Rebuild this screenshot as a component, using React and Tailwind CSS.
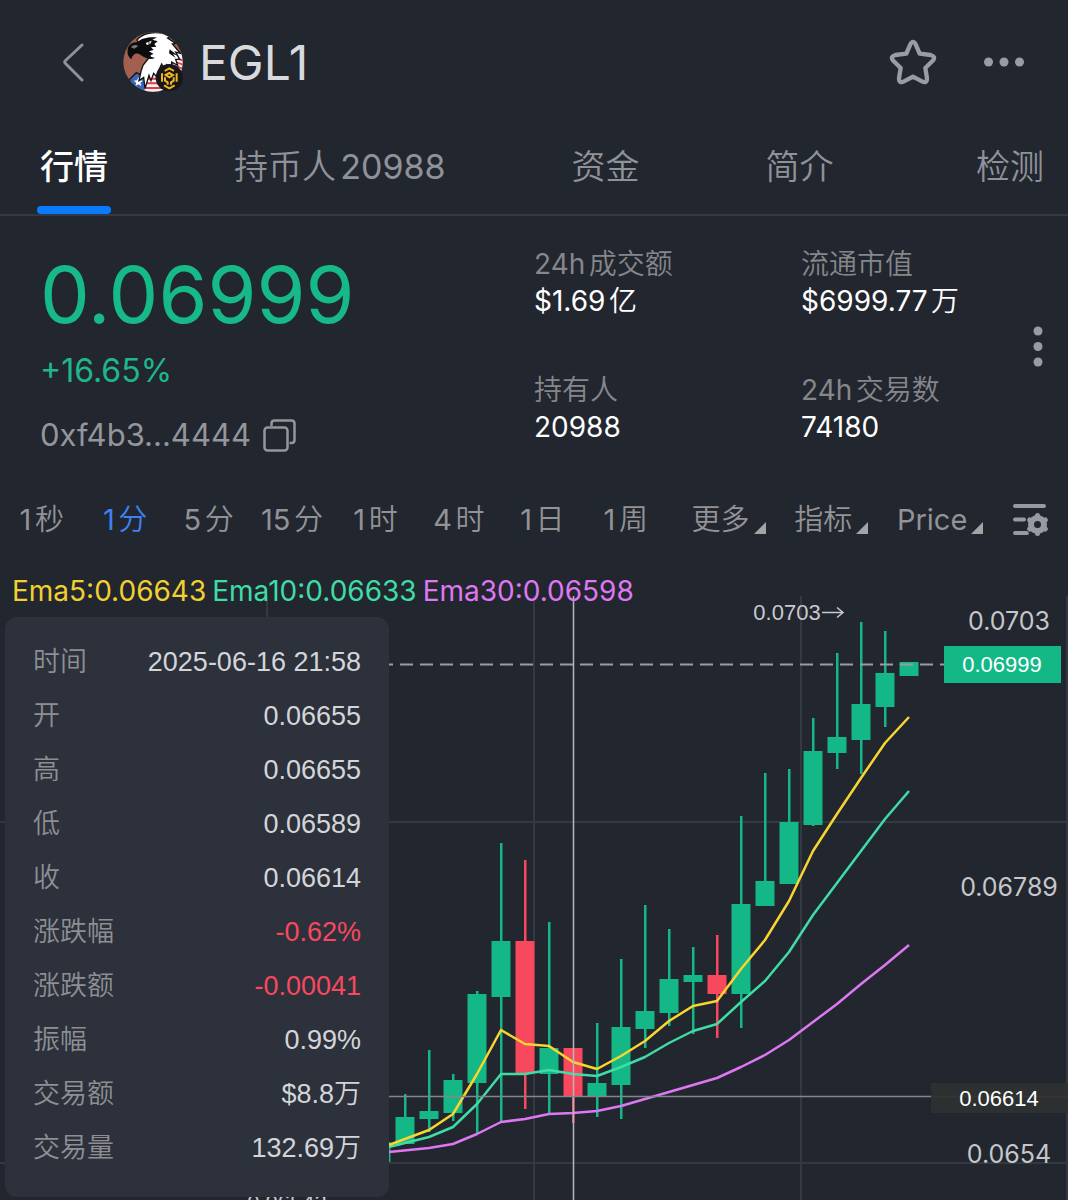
const tabs = ['行情', '持币人20988', '资金', '简介', '检测'];

const stats = [
    [
        { label: '24h成交额', value: '$1.69亿' },
        { label: '持有人', value: '20988' },
    ],
    [
        { label: '流通市值', value: '$6999.77万' },
        { label: '24h交易数', value: '74180' },
    ],
];

const intervals = ['1秒', '1分', '5分', '15分', '1时', '4时', '1日', '1周'];
const menus = ['更多', '指标', 'Price'];

const details = [
    { label: '时间', value: '2025-06-16 21:58' },
    { label: '开', value: '0.06655' },
    { label: '高', value: '0.06655' },
    { label: '低', value: '0.06589' },
    { label: '收', value: '0.06614' },
    { label: '涨跌幅', value: '-0.62%', down: true },
    { label: '涨跌额', value: '-0.00041', down: true },
    { label: '振幅', value: '0.99%' },
    { label: '交易额', value: '$8.8万' },
    { label: '交易量', value: '132.69万' },
];

// x, body top, body bottom, wick top, wick bottom, falling
const candles = [
    [381, 569, 589, 569, 589],
    [405, 544, 571, 521, 571],
    [429, 538, 546, 477, 559],
    [453, 507, 540, 501, 548],
    [477, 421, 510, 418, 560],
    [501, 368, 424, 270, 549],
    [525, 368, 500, 287, 536, true],
    [549, 475, 501, 349, 540],
    [573, 475, 523, 475, 550, true],
    [597, 510, 523, 450, 544],
    [621, 454, 512, 386, 546],
    [645, 438, 456, 332, 475],
    [669, 406, 440, 356, 453],
    [693, 402, 409, 374, 461],
    [717, 402, 421, 362, 465, true],
    [741, 331, 421, 243, 455],
    [765, 308, 333, 200, 333],
    [789, 249, 311, 196, 311],
    [813, 178, 252, 145, 253],
    [837, 164, 180, 80, 196],
    [861, 131, 167, 49, 201],
    [885, 100, 134, 58, 154],
    [909, 89, 103, 89, 103],
];

const emas = [
    { color: '#de78f2', points: '389,579 429,575 453,571 477,561 501,549 525,546 549,541 573,540 597,538 621,533 645,526 669,519 693,512 717,505 741,494 765,482 789,467 813,449 837,431 861,411 885,392 909,372' },
    { color: '#3fdca6', points: '389,574 405,570 429,564 453,554 477,531 501,501 525,501 549,497 573,501 597,503 621,494 645,484 669,470 693,458 717,451 741,429 765,408 789,379 813,342 837,310 861,278 885,246 909,218' },
    { color: '#f8d530', points: '389,572 405,566 429,557 453,541 477,501 501,457 525,471 549,473 573,489 597,496 621,483 645,468 669,448 693,433 717,428 741,396 765,367 789,328 813,278 837,241 861,205 885,170 909,144' },
];

function TokenLogo() {
    return (
        <svg viewBox="0 0 180 180" className="h-[60px] w-[60px]" aria-hidden="true">
            <defs>
                <clipPath id="logo-clip">
                    <circle cx="90" cy="90" r="89" />
                </clipPath>
            </defs>
            <g clipPath="url(#logo-clip)">
                <rect width="180" height="180" fill="#a4604f" />
                <path d="M20 142 L40 122 L76 140 L68 180 L20 180Z" fill="#3a66b4" stroke="#15151a" strokeWidth="4" />
                <path d="M46 136l4 9 10 1-8 6 3 10-9-5-9 5 3-10-8-6 10-1z" fill="#fff" />
                <path d="M70 126 H130 V180 H64Z" fill="#f4f0ee" />
                <path d="M70 140h50M68 154h50M66 168h60" stroke="#dd3c45" strokeWidth="6" />
                <path d="M152 60 L180 64 V130 L150 110Z" fill="#f4f0ee" />
                <path d="M160 78l20 8M158 90l22 8M156 102l24 8" stroke="#dd3c45" strokeWidth="5" />
                {/* Head and neck feathers */}
                <path
                    d="M42 24 C58 4 92 -2 120 4 L142 14 L134 18 L158 34 L148 36 L172 64 L158 60 L170 82 L158 82 L164 100 L146 90 L144 110 L132 98 L124 112 L116 96 L106 118 L102 136 L92 124 L84 146 L78 130 L66 170 L62 136 L48 146 L54 118 L60 100 L82 72 L60 50Z"
                    fill="#fff"
                    stroke="#101014"
                    strokeWidth="4"
                />
                <path d="M140 52 L166 72 L150 66 L158 78 L138 64Z" fill="#101014" />
                {/* Brow and beak */}
                <path
                    d="M14 54 C14 40 26 30 44 30 C54 18 78 14 102 16 L88 23 L104 28 L94 36 L100 44 L84 46 L92 54 L78 58 L92 66 L76 72 L96 78 C76 86 62 74 48 66 C38 62 28 68 25 82 C15 74 12 64 14 54Z"
                    fill="#0c0c0f"
                />
                <path d="M24 46 C30 38 38 37 46 42 L34 50Z" fill="#77787c" />
                <path d="M68 33 L86 26 L82 35 L72 39Z" fill="#fff" />
                <circle cx="78" cy="33" r="2.500" fill="#0c0c0f" />
            </g>
            <circle cx="139" cy="137" r="41" fill="#17171b" />
            <g fill="none" stroke="#eeb51f" strokeWidth="6">
                <path d="M125 117 L139 109 L153 117 M161 124 V149 M155 160 L139 169 L123 160 M117 149 V124" />
                <path d="M128 129 L139 123 L150 129 L139 136Z" />
                <path d="M126 136 V146 L134 151 V158 M152 136 V146 L144 151 V158" />
            </g>
        </svg>
    );
}

function Header() {
    return (
        <header className="flex h-[124px] items-center pr-11 pl-[60px]">
            <button type="button" aria-label="返回" className="mr-9">
                <svg viewBox="0 0 27 40" className="h-10 w-[27px]" fill="none" stroke="#8e9196" strokeWidth="3" strokeLinecap="round" strokeLinejoin="round">
                    <path d="M22 3 L5.500 18.500 Q4 20 5.500 21.500 L22 38" />
                </svg>
            </button>
            <TokenLogo />
            <h1 className="ml-4 pt-[2px] text-[48px] leading-[60px] text-[#d9dadd]">EGL1</h1>
            <button type="button" aria-label="收藏" className="ml-auto">
                <svg viewBox="86 54 144 144" className="h-12 w-12" fill="none" stroke="#999ca2" strokeWidth="13" strokeLinejoin="round">
                    <path d="M138 101 L150 73 Q158 58 166 73 L178 101 L211 105 Q228 110 217 122 L195 144 L200 175 Q200 192 185 184 L158 170 L131 184 Q116 192 116 175 L121 144 L99 122 Q88 110 105 105Z" />
                </svg>
            </button>
            <button type="button" aria-label="更多操作" className="ml-[47px]">
                <svg viewBox="0 0 40 10" className="h-[10px] w-10" fill="#999ca2">
                    <circle cx="4.500" cy="5" r="4.500" />
                    <circle cx="20" cy="5" r="4.500" />
                    <circle cx="35.500" cy="5" r="4.500" />
                </svg>
            </button>
        </header>
    );
}

function Tabs() {
    return (
        <nav className="flex items-start gap-[126px] border-b-2 border-[#343843] pr-6 pl-10 text-[34px] leading-[50px] [text-autospace:normal]">
            {tabs.map((tab, i) => (
                <a
                    key={tab}
                    href="#"
                    className={`flex flex-col pt-[18px] whitespace-nowrap last:ml-auto ${i === 0 ? "font-medium text-white [font-family:Inter,'Noto_Sans_CJK_SC',sans-serif]" : 'text-[#8f9299]'}`}
                >
                    {tab}
                    <span className={`-mx-[3px] mt-[14px] h-2 rounded-full ${i === 0 ? 'bg-[#0a7bff]' : ''}`}></span>
                </a>
            ))}
        </nav>
    );
}

function Summary() {
    return (
        <section className="flex">
            <div className="w-1/2 pt-[38px] pl-10">
                <p className="text-[79px] leading-[80px] text-[#16b987]">0.06999</p>
                <p className="mt-[13px] text-[32px] leading-[48px] text-[#1fb78a]">+16.65%</p>
                <div className="mt-4 flex items-center gap-3 text-[31px] leading-[48px] text-[#94969b]">
                    0xf4b3...4444
                    <button type="button" aria-label="复制地址">
                        <svg viewBox="0 0 33 33" className="h-[33px] w-[33px]" fill="none" stroke="#94969b" strokeWidth="2.500">
                            <rect x="1.500" y="8.500" width="23" height="23" rx="3" />
                            <path d="M8.500 7 V4.500 Q8.500 1.500 11.500 1.500 H28.500 Q31.500 1.500 31.500 4.500 V21 Q31.500 24 28.500 24 H26.500" />
                        </svg>
                    </button>
                </div>
            </div>
            {stats.map((column, i) => (
                <dl key={i} className={`flex flex-col gap-[52px] pt-[30px] text-[28px] leading-[37px] whitespace-nowrap [text-autospace:normal] ${i === 0 ? 'w-1/4' : 'flex-1'}`}>
                    {column.map((stat) => (
                        <div key={stat.label}>
                            <dt className="text-[#85878b]">{stat.label}</dt>
                            <dd className="text-white">{stat.value}</dd>
                        </div>
                    ))}
                </dl>
            ))}
            <button type="button" aria-label="展开" className="flex w-[60px] items-center justify-center pt-[17px]">
                <svg viewBox="0 0 10 41" className="h-[41px] w-[10px]" fill="#999c9e">
                    <circle cx="5" cy="5" r="4.500" />
                    <circle cx="5" cy="20.500" r="4.500" />
                    <circle cx="5" cy="36" r="4.500" />
                </svg>
            </button>
        </section>
    );
}

function Toolbar() {
    return (
        <div className="mt-[29px] flex h-16 items-center text-[29px] leading-10 text-[#929396] [text-autospace:normal]">
            <div className="grid w-5/8 grid-cols-8">
                {intervals.map((name) => (
                    <button key={name} type="button" className={`whitespace-nowrap ${name === '1分' ? 'text-[#3f80f2]' : ''}`}>
                        {name}
                    </button>
                ))}
            </div>
            <div className="flex flex-1 items-center justify-between pr-5 pl-6">
                {menus.map((name) => (
                    <button key={name} type="button" aria-haspopup="menu" className="flex items-end gap-1">
                        {name}
                        <svg viewBox="0 0 12 12" className="mb-[6px] h-3 w-3" fill="#a3a4a6">
                            <path d="M12 0V12H0Z" />
                        </svg>
                    </button>
                ))}
                <button type="button" aria-label="图表设置">
                    <svg viewBox="0 0 36 34" className="h-[34px] w-9" fill="none" stroke="#979aa1" strokeWidth="4" strokeLinecap="round">
                        <path d="M3 3H32M3 16.500H12M3 30H15" />
                        {/* Gear, with a gap cut into the lines behind it */}
                        <circle cx="25.500" cy="21.500" r="12" fill="#22262f" stroke="none" />
                        <circle cx="25.500" cy="21.500" r="6.500" strokeWidth="6" />
                        <path d="M25.500 12.500V13M25.500 30V30.500M17.700 17L18.200 17.300M33.300 26L32.800 25.700M17.700 26L18.200 25.700M33.300 17L32.800 17.300" strokeWidth="5" />
                    </svg>
                </button>
            </div>
        </div>
    );
}

function Chart() {
    return (
        <svg viewBox="0 0 1068 627" className="block w-full" role="img" aria-label="K线图">
            {/* Grid */}
            <path d="M267 23V627M534 23V627M801 23V627M1067 23V627M0 249H1068M0 590H1068" stroke="#343841" strokeWidth="2" />

            {candles.map(([x, top, bottom, high, low, down]) => (
                <g key={x} fill={down ? '#f8485e' : '#14b886'}>
                    <rect x={x - 1} y={high} width="2.500" height={low - high} />
                    <rect x={x - 9.5} y={top} width="19" height={bottom - top} />
                </g>
            ))}

            {emas.map((ema) => (
                <polyline key={ema.color} points={ema.points} fill="none" stroke={ema.color} strokeWidth="2.500" strokeLinejoin="round" />
            ))}

            {/* Last price */}
            <path d="M380 91.500H944" stroke="#9a9ca1" strokeWidth="2" strokeDasharray="13 7" />
            <rect x="944" y="73" width="117" height="37" fill="#14b886" />

            {/* Crosshair */}
            <path d="M573.500 23V627" stroke="#b4b6bb" strokeWidth="1.500" />
            <path d="M380 523.500H1068" stroke="#84868b" strokeWidth="1.500" />
            <rect x="931" y="510" width="137" height="30" fill="#2e3031" fillOpacity="0.950" />

            <g className="[font-family:'Liberation_Sans',sans-serif] text-[22px]" fill="#ffffff" textAnchor="middle">
                <text x="1002" y="99">0.06999</text>
                <text x="999" y="533">0.06614</text>
                <text x="787" y="47" fill="#c9cacd">0.0703</text>
                <text x="287" y="637" fill="#c9cacd">0.06543</text>
            </g>
            <path d="M822 39.500H843M837 34.500L843 39.500L837 44.500" fill="none" stroke="#c9cacd" strokeWidth="1.500" />

            <g className="text-[25px]" fill="#c6c7ca" textAnchor="middle">
                <text x="1009" y="57">0.0703</text>
                <text x="1009" y="323">0.06789</text>
                <text x="1009" y="590">0.0654</text>
            </g>
        </svg>
    );
}

export default function App() {
    return (
        <main className="min-h-screen overflow-hidden bg-[#22262f] [font-family:Inter,'Noto_Sans_CJK_SC_DemiLight','Noto_Sans_CJK_SC',sans-serif]">
            <Header />
            <Tabs />
            <Summary />
            <Toolbar />

            <section className="relative mt-[21px]">
                <Chart />
                <div className="absolute top-0 left-3 flex gap-[6px] text-[28px] leading-9 whitespace-nowrap">
                    <span className="text-[#f3d02f]">Ema5:0.06643</span>
                    <span className="text-[#3fdca6]">Ema10:0.06633</span>
                    <span className="text-[#de78f2]">Ema30:0.06598</span>
                </div>

                {/* Candle details */}
                <dl className="absolute top-11 left-[5px] w-96 rounded-xl bg-[#2c313c] px-7 pt-[18px] pb-[22px] text-[27px] leading-[54px] [font-family:'Liberation_Sans','Noto_Sans_CJK_SC_DemiLight','Noto_Sans_CJK_SC',sans-serif]">
                    {details.map((row) => (
                        <div key={row.label} className="flex justify-between">
                            <dt className="text-[#8d8f93]">{row.label}</dt>
                            <dd className={row.down ? 'text-[#f8485e]' : 'text-[#d4d5d8]'}>{row.value}</dd>
                        </div>
                    ))}
                </dl>
            </section>
        </main>
    );
}
